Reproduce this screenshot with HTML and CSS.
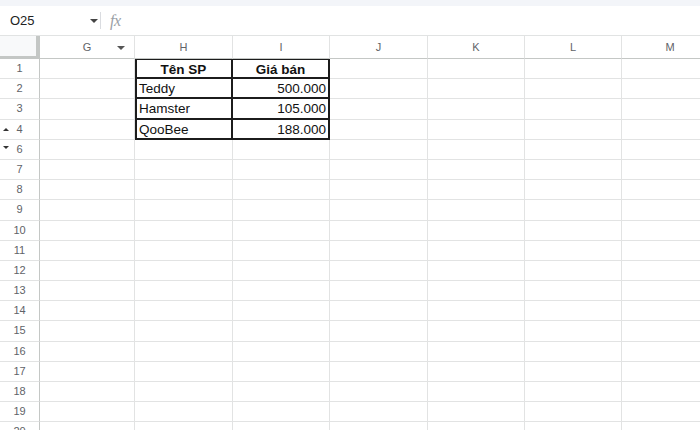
FILE: index.html
```html
<!DOCTYPE html>
<html>
<head>
<meta charset="utf-8">
<title>Bảng tính</title>
<link rel="stylesheet" href="styles.css">
</head>
<body>
<div class="strip"></div>

<!-- thanh công thức -->
<div class="fbar">
	<div class="namebox">
		<span class="ref">O25</span>
		<span class="caret"></span>
	</div>
	<span class="sep"></span>
	<span class="fx">fx</span>
</div>

<div class="sheet">
	<div class="row head">
		<div class="corner"></div>
		<div class="ch">G<span class="caret small"></span></div>
		<div class="ch">H</div>
		<div class="ch">I</div>
		<div class="ch">J</div>
		<div class="ch">K</div>
		<div class="ch">L</div>
		<div class="ch">M</div>
	</div>
	<div class="row">
		<div class="rh">1</div><div></div>
		<div class="t th first">Tên SP</div><div class="t th">Giá bán</div>
		<div></div><div></div><div></div><div></div>
	</div>
	<div class="row">
		<div class="rh">2</div><div></div>
		<div class="t first">Teddy</div><div class="t num">500.000</div>
		<div></div><div></div><div></div><div></div>
	</div>
	<div class="row">
		<div class="rh">3</div><div></div>
		<div class="t first">Hamster</div><div class="t num">105.000</div>
		<div></div><div></div><div></div><div></div>
	</div>
	<div class="row">
		<div class="rh"><span class="tri up"></span>4</div><div></div>
		<div class="t first">QooBee</div><div class="t num">188.000</div>
		<div></div><div></div><div></div><div></div>
	</div>
	<div class="row">
		<div class="rh"><span class="tri down"></span>6</div>
		<div></div><div></div><div></div><div></div><div></div><div></div><div></div>
	</div>
	<div class="row"><div class="rh">7</div><div></div><div></div><div></div><div></div><div></div><div></div><div></div></div>
	<div class="row"><div class="rh">8</div><div></div><div></div><div></div><div></div><div></div><div></div><div></div></div>
	<div class="row"><div class="rh">9</div><div></div><div></div><div></div><div></div><div></div><div></div><div></div></div>
	<div class="row"><div class="rh">10</div><div></div><div></div><div></div><div></div><div></div><div></div><div></div></div>
	<div class="row"><div class="rh">11</div><div></div><div></div><div></div><div></div><div></div><div></div><div></div></div>
	<div class="row"><div class="rh">12</div><div></div><div></div><div></div><div></div><div></div><div></div><div></div></div>
	<div class="row"><div class="rh">13</div><div></div><div></div><div></div><div></div><div></div><div></div><div></div></div>
	<div class="row"><div class="rh">14</div><div></div><div></div><div></div><div></div><div></div><div></div><div></div></div>
	<div class="row"><div class="rh">15</div><div></div><div></div><div></div><div></div><div></div><div></div><div></div></div>
	<div class="row"><div class="rh">16</div><div></div><div></div><div></div><div></div><div></div><div></div><div></div></div>
	<div class="row"><div class="rh">17</div><div></div><div></div><div></div><div></div><div></div><div></div><div></div></div>
	<div class="row"><div class="rh">18</div><div></div><div></div><div></div><div></div><div></div><div></div><div></div></div>
	<div class="row"><div class="rh">19</div><div></div><div></div><div></div><div></div><div></div><div></div><div></div></div>
	<div class="row"><div class="rh">20</div><div></div><div></div><div></div><div></div><div></div><div></div><div></div></div>
</div>
</body>
</html>
```

FILE: styles.css
```css
html, body {
	margin: 0;
	padding: 0;
	background: #fff;
	overflow: hidden;
}
body {
	width: 700px;
	height: 430px;
	font-family: "Liberation Sans", Arial, sans-serif;
	color: #000;
}
.strip {
	height: 6px;
	background: #f3f5f9;
}

/* barre de formule */
.fbar {
	display: flex;
	align-items: center;
	height: 30px;
	border-bottom: 1px solid #e1e3e3;
	box-sizing: border-box;
}
.namebox {
	display: flex;
	align-items: center;
	width: 88px;
	padding-left: 10px;
	font-size: 13px;
	color: #222;
}
.ref {
	flex: 1;
}
.caret {
	width: 0;
	height: 0;
	border-left: 4px solid transparent;
	border-right: 4px solid transparent;
	border-top: 4px solid #444;
}
.sep {
	width: 1px;
	height: 17px;
	background: #dadce0;
	margin-left: 2px;
	margin-right: 9px;
}
.fx {
	font-family: "Liberation Serif", serif;
	font-style: italic;
	font-size: 16px;
	color: #9aa0a6;
	letter-spacing: -0.5px;
}

/* feuille */
.row {
	display: grid;
	grid-template-columns: 40px 95px 98px 97px 98px 97px 97px 97px;
	height: 20.2px;
}
.row > div {
	box-sizing: border-box;
	border-right: 1px solid #e2e3e3;
	border-bottom: 1px solid #e2e3e3;
	font-size: 13px;
	line-height: 19px;
	white-space: nowrap;
	overflow: hidden;
}
.row.head {
	height: 23px;
}
.row.head > div {
	border-bottom-color: #c4c7c5;
	line-height: 22px;
}
.corner {
	background: #f8f9fa;
	border-right: 4px solid #c4c7c5 !important;
	border-bottom: 3px solid #c4c7c5 !important;
}
.ch {
	position: relative;
	text-align: center;
	font-size: 11px !important;
	color: #5f6368;
}
.caret.small {
	position: absolute;
	right: 9px;
	top: 10px;
	border-top-color: #555;
}
.rh {
	position: relative;
	text-align: center;
	font-size: 11px !important;
	color: #5f6368;
	border-right-color: #c4c7c5 !important;
}
.tri {
	position: absolute;
	left: 3px;
	width: 0;
	height: 0;
	border-left: 3px solid transparent;
	border-right: 3px solid transparent;
}
.tri.up {
	top: 8px;
	border-bottom: 3px solid #333;
}
.tri.down {
	top: 6px;
	border-top: 3px solid #333;
}

/* tableau */
.row > .t {
	border-right: 2px solid #1c1c1c;
	border-bottom: 2px solid #1c1c1c;
	padding: 1px 3px 0;
	line-height: 18px;
	font-size: 13.5px;
	color: #111;
}
.row > .first {
	border-left: 2px solid #1c1c1c;
	padding-left: 2px;
}
.row > .th {
	border-top: 1px solid #1c1c1c;
	box-shadow: 0 -1px 0 #1c1c1c;
	font-weight: bold;
	text-align: center;
	line-height: 17px;
}
.row > .num {
	text-align: right;
	padding-right: 2px;
}
```
